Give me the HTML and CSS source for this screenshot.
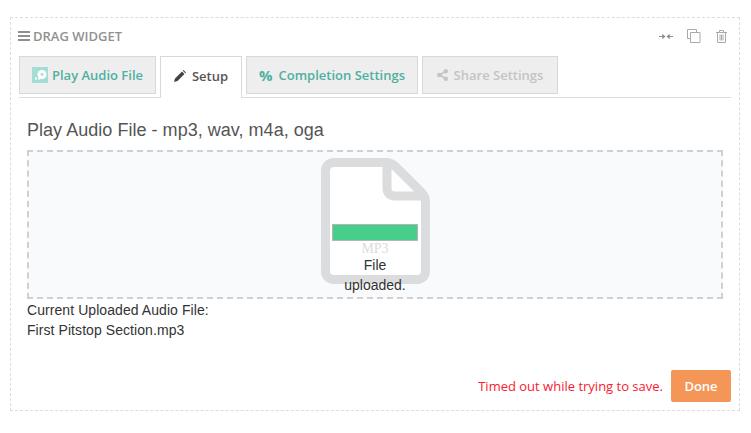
FILE: index.html
```html
<!DOCTYPE html>
<html lang="en">
<head>
<meta charset="utf-8">
<title>Drag Widget</title>
<link rel="stylesheet" href="styles.css">
</head>
<body>
<div class="widget">
  <div class="widget-head">
    <div class="drag">
      <svg class="bars" viewBox="0 0 12 10" width="12" height="10"><path d="M0 0h12v2H0zM0 4h12v2H0zM0 8h12v2H0z" fill="#8f8f8f"/></svg>
      <span>DRAG WIDGET</span>
    </div>
    <div class="tools">
      <svg viewBox="0 0 15 7" width="14" height="7"><path d="M0 3h3.500V.5L7 3.500 3.500 6.500V4H0zM15 3h-3.500V.5L8 3.500l3.500 3V4H15z" fill="#8e8e8e"/></svg>
      <svg viewBox="0 0 14 14" width="14" height="14" fill="none" stroke="#aaa" stroke-width="1"><path d="M9.500 3.500V.5H.5v9h3"/><path d="M3.500 3.500h9.500v10H3.500z"/></svg>
      <svg class="trash" viewBox="0 0 11 13" width="11" height="13" fill="none" stroke="#aaa" stroke-width="1"><path d="M0 2.500h11M3.500 2.500V.5h4v2M1.500 2.500v10h8v-10M4 4.500v6M5.500 4.500v6M7 4.500v6"/></svg>
    </div>
  </div>
  <div class="tabs">
    <div class="tab tab-play">
      <svg class="tab-icon" viewBox="0 0 16 16" width="16" height="16"><rect width="16" height="16" fill="#a5dcd4"/><circle cx="10" cy="7.500" r="4.500" fill="#fff"/><circle cx="10" cy="7.500" r="1.400" fill="#a5dcd4"/><path d="M3 12.500h2v-2H3zM6 12.500h2l1-4H7z" fill="#fff"/></svg>
      Play Audio File
    </div>
    <div class="tab tab-active">
      <svg class="tab-icon" viewBox="0 0 12 12" width="12" height="12"><path d="M0 12l1-3.500L8 1.500 10.500 4 3.500 11zM8.800.7l.7-.7L12 2.500l-.7.7z" fill="#444"/></svg>
      Setup
    </div>
    <div class="tab tab-completion">
      <span class="percent">%</span>
      Completion Settings
    </div>
    <div class="tab tab-disabled">
      <svg class="tab-icon" viewBox="0 0 11 12" width="11" height="12"><path d="M8.500 2.500L2.500 6l6 3.500" stroke="#c4c4c4" stroke-width="1.500" fill="none"/><circle cx="8.800" cy="2.200" r="2.200" fill="#c4c4c4"/><circle cx="2.200" cy="6" r="2.200" fill="#c4c4c4"/><circle cx="8.800" cy="9.800" r="2.200" fill="#c4c4c4"/></svg>
      Share Settings
    </div>
  </div>
  <div class="panel">
    <h2 class="title">Play Audio File - mp3, wav, m4a, oga</h2>
    <div class="dropzone">
      <div class="preview">
        <svg class="file" viewBox="0 0 109 126" width="109" height="126"><path d="M13 4.500h52c4 0 7 1.500 10 4.500l25 25c3 3 4.500 6 4.500 10v69c0 5-3.500 8.500-8.500 8.500H13c-5 0-8.500-3.500-8.500-8.500V13c0-5 3.500-8.500 8.500-8.500z" fill="#fff" stroke="#dbdcde" stroke-width="9"/><path d="M66 5v25c0 5 3 8 8 8h30" fill="none" stroke="#dbdcde" stroke-width="9"/></svg>
        <div class="bar"></div>
        <div class="ext">MP3</div>
        <div class="status">File uploaded.</div>
      </div>
    </div>
    <div class="current">
      <div>Current Uploaded Audio File:</div>
      <div>First Pitstop Section.mp3</div>
    </div>
  </div>
  <div class="footer">
    <span class="error">Timed out while trying to save.</span>
    <button class="done">Done</button>
  </div>
</div>
</body>
</html>
```
FILE: styles.css
```css
* { box-sizing: border-box; }
html, body { margin: 0; padding: 0; background: #fff; }
body { padding: 17px 10px 0; font-family: "Open Sans", sans-serif; width: 751px; height: 433px; overflow: hidden; }
.widget { width: 730px; height: 394px; border: 1px dashed #dcdcdc; padding: 0 8px; display: flex; flex-direction: column; }
.widget-head { height: 38px; display: flex; align-items: center; justify-content: space-between; padding-bottom: 2px; }
.drag { display: flex; align-items: center; gap: 3px; color: #919191; font-size: 13px; font-weight: 600; margin-left: -1px; }
.tools { display: flex; align-items: center; gap: 14px; padding-right: 4px; }
.trash { margin-left: 1px; }
.tab-icon { flex: none; }
.tabs { display: flex; gap: 4px; height: 42px; border-bottom: 1px solid #dcdcdc; align-items: flex-start; }
.tab { height: 38px; display: flex; align-items: center; justify-content: center; gap: 6px; border: 1px solid #d8d8d8; background: #eeeeee; font-size: 13px; font-weight: 600; color: #4fb0a1; white-space: nowrap; }
.tab-play { width: 137px; gap: 4px; }
.tab-active { width: 82px; height: 42px; background: #fff; color: #555; border-bottom: 0; padding-bottom: 4px; }
.tab-completion { width: 172px; }
.tab-disabled { width: 136px; color: #c4c4c4; }
.percent { font-weight: 700; font-size: 15px; }
.panel { padding: 0 8px; flex: 1; }
.title { margin: 22px 0 0; font: 400 18px/20px "Liberation Sans", Arial, sans-serif; letter-spacing: 0.03px; color: #555; height: 30px; }
.dropzone { height: 149px; border: 2px dashed #cfd0d2; background: #f9fafc; display: flex; justify-content: center; }
.preview { position: relative; width: 109px; height: 126px; margin-top: 6px; }
.file { display: block; }
.bar { position: absolute; left: 11px; top: 66px; width: 86px; height: 17px; background: #48ce8b; border: 1px solid #b5b5b5; }
.ext { position: absolute; left: 0; right: 0; top: 84px; text-align: center; font: 14px/14px "Liberation Serif", serif; color: #dcdcdc; }
.status { position: absolute; left: 11px; width: 87px; top: 97px; text-align: center; font: 14px/20px "Liberation Sans", Arial, sans-serif; color: #333; }
.current { margin-top: 1px; font: 14px/20px "Liberation Sans", Arial, sans-serif; letter-spacing: 0.07px; color: #333; }
.footer { display: flex; justify-content: flex-end; align-items: center; gap: 8px; padding-bottom: 8px; }
.error { font-size: 13px; color: #f8202f; }
.done { width: 60px; height: 32px; border: 0; border-radius: 2px; background: #f39657; color: #fff; font: 600 13px "Open Sans", sans-serif; padding: 0; }
```
